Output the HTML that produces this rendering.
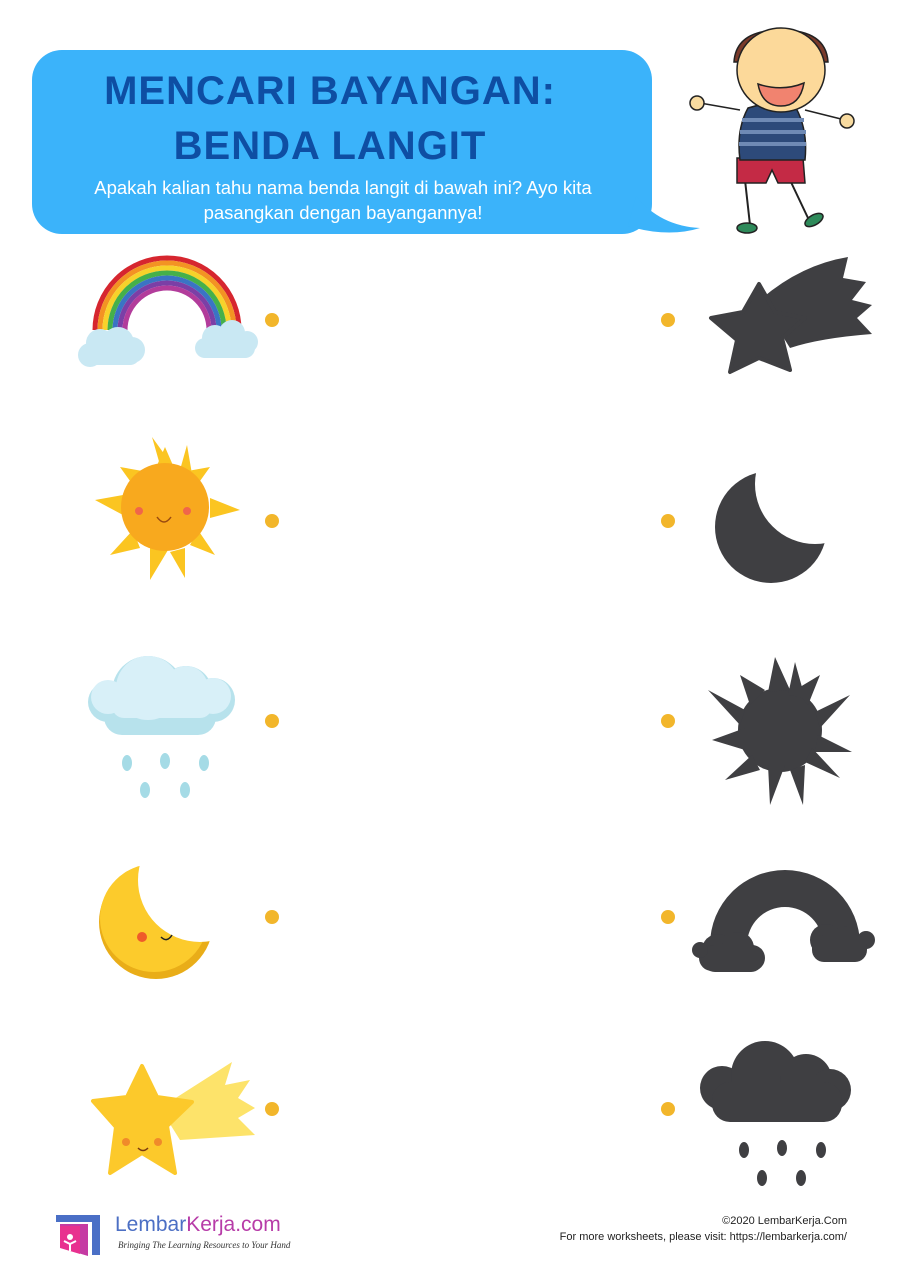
<!DOCTYPE html>
<html><head><meta charset="utf-8"><style>
html,body{margin:0;padding:0;background:#fff;width:904px;height:1280px;overflow:hidden}
svg{position:absolute;left:0;top:0}
.t{font-family:"Liberation Sans",sans-serif;}
</style></head><body>
<svg width="904" height="1280" viewBox="0 0 904 1280" xmlns="http://www.w3.org/2000/svg">
<defs>
<mask id="mL"><rect width="904" height="1280" fill="#fff"/><circle cx="200" cy="880" r="62" fill="#000"/></mask>
<mask id="mR"><rect width="904" height="1280" fill="#fff"/><circle cx="815" cy="484" r="60" fill="#000"/></mask>
</defs>
<!-- bubble -->
<rect x="32" y="50" width="620" height="184" rx="30" fill="#3bb3fa"/>
<path d="M636 196 Q660 226 700 228 Q668 238 628 226Z" fill="#3bb3fa"/>
<text x="330" y="104" text-anchor="middle" class="t" font-size="40" font-weight="bold" fill="#0e4ea3" letter-spacing="1">MENCARI BAYANGAN:</text>
<text x="330" y="159" text-anchor="middle" class="t" font-size="40" font-weight="bold" fill="#0e4ea3" letter-spacing="1">BENDA LANGIT</text>
<text x="343" y="194" text-anchor="middle" class="t" font-size="18.5" fill="#fff">Apakah kalian tahu nama benda langit di bawah ini? Ayo kita</text>
<text x="343" y="219" text-anchor="middle" class="t" font-size="18.5" fill="#fff">pasangkan dengan bayangannya!</text>
<!-- boy -->
<g stroke="#222" stroke-width="1.5">
<path d="M745 180 L750 225 M790 180 L808 218" fill="none" stroke-width="2"/>
<ellipse cx="747" cy="228" rx="10" ry="5" fill="#2e8a5a"/>
<ellipse cx="814" cy="220" rx="10" ry="5" fill="#2e8a5a" transform="rotate(-30 814 220)"/>
<path d="M740 110 L700 103 M805 110 L845 120" fill="none"/>
<circle cx="697" cy="103" r="7" fill="#f8dba0"/><circle cx="847" cy="121" r="7" fill="#f8dba0"/>
<path d="M737 158 H803 L805 183 H778 L772 170 L766 183 H737Z" fill="#c42a45"/>
<path d="M748 108 Q772 100 796 108 Q808 130 805 160 H740 Q736 130 748 108Z" fill="#2d4a7a"/>
<path d="M742 120 H804 M740 132 H806 M739 144 H806" stroke="#6f8ab5" stroke-width="4"/>
<path d="M734 62 Q736 30 781 30 Q826 30 828 62 Z" fill="#7a3a2a"/>
<ellipse cx="781" cy="70" rx="44" ry="42" fill="#fcd99a"/>
<path d="M758 84 Q782 92 804 83 Q800 106 781 106 Q762 106 758 84Z" fill="#f1836f"/>
</g>
<!-- dots -->
<g fill="#f2b62b">
<circle cx="272" cy="320" r="7"/><circle cx="668" cy="320" r="7"/>
<circle cx="272" cy="521" r="7"/><circle cx="668" cy="521" r="7"/>
<circle cx="272" cy="721" r="7"/><circle cx="668" cy="721" r="7"/>
<circle cx="272" cy="917" r="7"/><circle cx="668" cy="917" r="7"/>
<circle cx="272" cy="1109" r="7"/><circle cx="668" cy="1109" r="7"/>
</g>
<!-- rainbow -->
<g fill="none" stroke-width="5">
<path d="M95 330 A72 72 0 0 1 239 330" stroke="#d6262f"/>
<path d="M100 330 A67 67 0 0 1 234 330" stroke="#f39323"/>
<path d="M105 330 A62 62 0 0 1 229 330" stroke="#f7d22a"/>
<path d="M110 330 A57 57 0 0 1 224 330" stroke="#45b04a"/>
<path d="M115 330 A52 52 0 0 1 219 330" stroke="#3a74c4"/>
<path d="M120 330 A47 47 0 0 1 214 330" stroke="#7b3fa6"/>
<path d="M125 330 A42 42 0 0 1 209 330" stroke="#b23c9b"/>
</g>
<g fill="#c9e8f3"><circle cx="100" cy="343" r="14"/><circle cx="118" cy="343" r="16"/><circle cx="132" cy="350" r="13"/><circle cx="90" cy="355" r="12"/><rect x="85" y="345" width="55" height="20" rx="10"/>
<circle cx="215" cy="338" r="13"/><circle cx="232" cy="333" r="13"/><circle cx="247" cy="342" r="11"/><rect x="195" y="338" width="60" height="20" rx="10"/></g>
<!-- sun -->
<g fill="#fbc521">
<path d="M165 447 L155 470 175 470Z M120 467 L135 488 148 472Z M210 467 L182 472 195 488Z M95 500 L123 495 123 515Z M240 510 L210 498 210 518Z M110 555 L133 530 140 548Z M215 555 L190 545 198 530Z M150 580 L150 548 168 550Z M185 578 L170 552 185 548Z M152 437 L160 465 170 462Z M187 445 L180 470 192 474Z"/>
</g>
<circle cx="165" cy="507" r="44" fill="#f8a91e"/>
<circle cx="139" cy="511" r="4" fill="#f0664a"/><circle cx="187" cy="511" r="4" fill="#f0664a"/>
<path d="M157 517 Q164 527 171 517" stroke="#9a4b10" stroke-width="1.5" fill="none"/>
<!-- cloud -->
<g fill="#b7e2ec"><circle cx="108" cy="702" r="20"/><circle cx="148" cy="692" r="36"/><circle cx="186" cy="692" r="26"/><circle cx="213" cy="700" r="22"/><rect x="104" y="695" width="112" height="40" rx="18"/></g>
<g fill="#d8f0f8"><circle cx="108" cy="697" r="17"/><circle cx="148" cy="688" r="32"/><circle cx="186" cy="688" r="22"/><circle cx="213" cy="696" r="18"/><rect x="112" y="690" width="100" height="28" rx="12"/></g>
<g fill="#a5dbe6"><ellipse cx="127" cy="763" rx="5" ry="8"/><ellipse cx="165" cy="761" rx="5" ry="8"/><ellipse cx="204" cy="763" rx="5" ry="8"/><ellipse cx="145" cy="790" rx="5" ry="8"/><ellipse cx="185" cy="790" rx="5" ry="8"/></g>
<!-- moon left -->
<g mask="url(#mL)"><circle cx="156" cy="922" r="57" fill="#e9ad18"/><circle cx="154" cy="918" r="54" fill="#fccb2c"/></g>
<circle cx="142" cy="937" r="5" fill="#ef5b2a"/>
<path d="M161 937 Q167 943 172 935" stroke="#222" stroke-width="1.5" fill="none"/>
<!-- shooting star left -->
<path d="M160 1108 L232 1062 L225 1085 L250 1080 L238 1098 L255 1108 L238 1118 L255 1135 L180 1140Z" fill="#fde36a"/>
<path d="M142 1066 L157 1097 L192 1102 L167 1126 L175 1173 L142 1153 L110 1173 L116 1127 L93 1101 L127 1097Z" fill="#fcc92b" stroke="#fcc92b" stroke-width="4" stroke-linejoin="round"/>
<circle cx="126" cy="1142" r="4" fill="#f08a2a"/><circle cx="158" cy="1142" r="4" fill="#f08a2a"/>
<path d="M138 1148 Q143 1153 148 1148" stroke="#7a3a10" stroke-width="1.5" fill="none"/>
<!-- silhouettes -->
<g fill="#3f3f42">
<path d="M760 300 Q800 265 848 257 L843 278 L866 282 L852 300 L872 305 L857 318 L872 334 Q820 338 790 348Z"/>
<path d="M759 284 L775 312 L805 318 L782 338 L790 370 L759 358 L730 372 L737 340 L711 318 L743 312Z" stroke="#3f3f42" stroke-width="4" stroke-linejoin="round"/>
<circle cx="771" cy="527" r="56" mask="url(#mR)"/>
<circle cx="780" cy="730" r="42"/>
<path d="M775 657 L768 692 790 690Z M740 675 L750 705 765 690Z M820 675 L795 690 808 705Z M708 690 L745 710 740 725Z M850 695 L815 712 820 728Z M712 740 L745 728 745 750Z M852 752 L818 735 815 752Z M725 780 L752 755 760 770Z M840 778 L805 762 812 748Z M770 805 L768 765 785 765Z M803 805 L790 770 805 765Z M795 662 L788 695 805 698Z"/>
<path d="M710 945 A75 75 0 0 1 860 945 L823 945 A38 38 0 0 0 747 945Z"/>
<circle cx="718" cy="950" r="16"/><circle cx="738" cy="948" r="16"/><circle cx="712" cy="958" r="13"/><circle cx="752" cy="958" r="13"/><rect x="703" y="945" width="60" height="27" rx="12"/><circle cx="700" cy="950" r="8"/>
<circle cx="826" cy="940" r="16"/><circle cx="846" cy="940" r="14"/><circle cx="866" cy="940" r="9"/><rect x="812" y="935" width="55" height="27" rx="12"/>
<circle cx="722" cy="1088" r="22"/><circle cx="765" cy="1075" r="34"/><circle cx="806" cy="1080" r="26"/><circle cx="830" cy="1090" r="21"/><rect x="712" y="1082" width="130" height="40" rx="18"/>
<ellipse cx="744" cy="1150" rx="5" ry="8"/><ellipse cx="782" cy="1148" rx="5" ry="8"/><ellipse cx="821" cy="1150" rx="5" ry="8"/><ellipse cx="762" cy="1178" rx="5" ry="8"/><ellipse cx="801" cy="1178" rx="5" ry="8"/>
</g>
<!-- footer logo -->
<path d="M56 1215 L100 1215 L100 1255 L92 1255 L92 1222 L56 1222Z" fill="#4a6fc6"/>
<path d="M60 1224 L88 1224 L88 1256 L68 1250 L60 1240Z" fill="#c53aa3"/>
<path d="M60 1226 L80 1226 L80 1254 L60 1248Z" fill="#e8318f"/>
<circle cx="70" cy="1237" r="3" fill="#fff"/><path d="M64 1241 L70 1244 L76 1241 M70 1244 L70 1251" stroke="#fff" stroke-width="2" fill="none"/>
<text x="115" y="1231" class="t" font-size="21" fill="#4c6fc4">Lembar<tspan fill="#b73ca8">Kerja.com</tspan></text>
<text x="118" y="1248" font-family="Liberation Serif,serif" font-style="italic" font-size="9" fill="#333">Bringing The Learning Resources to Your Hand</text>
<text x="847" y="1224" text-anchor="end" class="t" font-size="11" fill="#222">©2020 LembarKerja.Com</text>
<text x="847" y="1240" text-anchor="end" class="t" font-size="11" fill="#222">For more worksheets, please visit: https://lembarkerja.com/</text>
</svg>
</body></html>
